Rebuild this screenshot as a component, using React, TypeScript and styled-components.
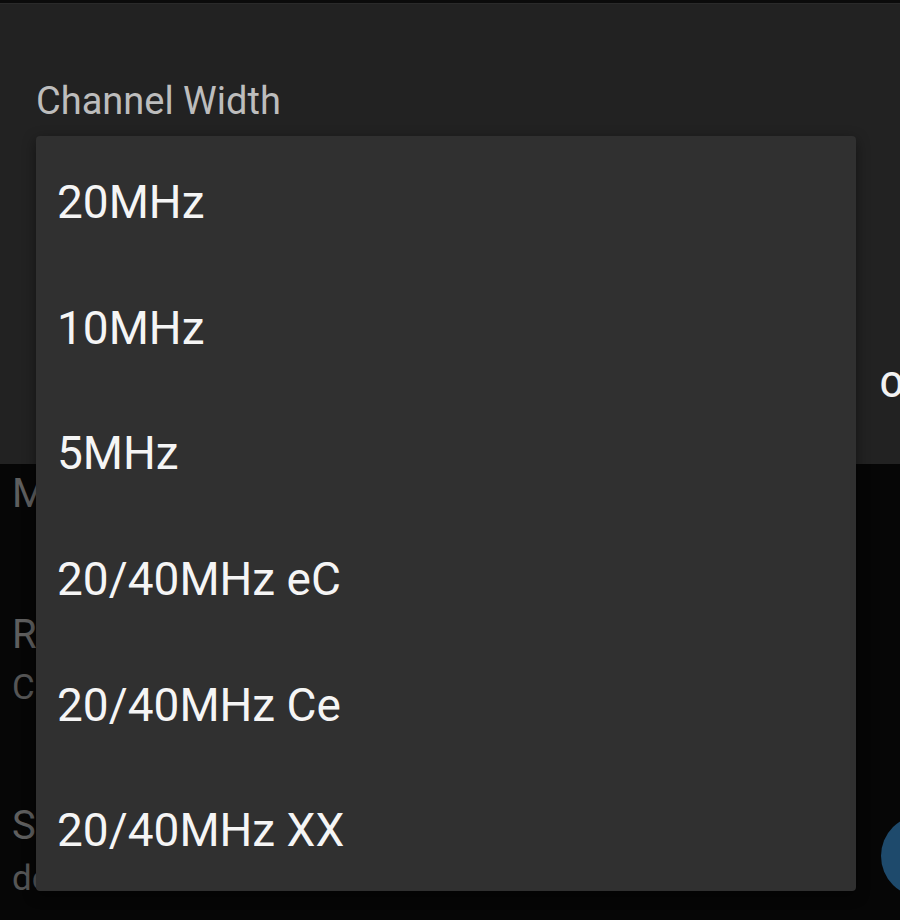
import React from "react";
import styled, { createGlobalStyle } from "styled-components";

const Global = createGlobalStyle`
  html, body { margin: 0; padding: 0; background: #060606; }
  body { font-family: Roboto, "Noto Sans", "Liberation Sans", sans-serif; }
`;

const Screen = styled.div`
  position: relative;
  width: 900px;
  height: 920px;
  overflow: hidden;
  background: #060606;
  display: flex;
  flex-direction: column;
`;

const TopStrip = styled.div`
  height: 3px;
  background: #0b0b0b;
  flex: none;
`;

const Dialog = styled.div`
  height: 461px;
  flex: none;
  background: #222222;
  border-top: 1px solid #2a2a2a;
  box-sizing: border-box;
  display: flex;
  flex-direction: column;
  padding: 75px 0 0 36px;
`;

const FieldLabel = styled.div`
  font-size: 38px;
  line-height: 44px;
  color: #bdbdbd;
`;

const Actions = styled.div`
  margin-top: 242px;
  display: flex;
  justify-content: flex-end;
  margin-right: -26px;
`;

const ActionButton = styled.span`
  font-size: 35px;
  line-height: 41px;
  font-weight: 500;
  color: #f2f2f2;
`;

const PrefList = styled.div`
  display: flex;
  flex-direction: column;
  gap: 94px;
  padding: 6px 0 0 12px;
`;

const Pref = styled.div`
  display: flex;
  flex-direction: column;
  gap: 9px;
`;

const PrefTitle = styled.div`
  font-size: 40px;
  line-height: 47px;
  color: #5e5e5e;
  white-space: nowrap;
`;

const PrefSummary = styled.div`
  font-size: 35px;
  line-height: 41px;
  color: #555555;
  white-space: nowrap;
`;

const Fab = styled.div`
  position: absolute;
  left: 881px;
  top: 815px;
  width: 82px;
  height: 82px;
  border-radius: 50%;
  background: #1e4a6c;
`;

const Menu = styled.ul`
  position: absolute;
  left: 36px;
  top: 136px;
  width: 820px;
  height: 755px;
  margin: 0;
  padding: 4px 0 0;
  box-sizing: border-box;
  list-style: none;
  background: #303030;
  border-radius: 4px;
  box-shadow: 0 4px 14px rgba(0, 0, 0, 0.45);
  overflow: hidden;
`;

const MenuItem = styled.li`
  height: 125.7px;
  line-height: 125.7px;
  padding: 0 21px;
  font-size: 46px;
  color: #f5f5f5;
  white-space: nowrap;
`;

const options = [
  "20MHz",
  "10MHz",
  "5MHz",
  "20/40MHz eC",
  "20/40MHz Ce",
  "20/40MHz XX",
];

export default function App() {
  return (
    <Screen>
      <Global />
      <TopStrip />
      <Dialog>
        <FieldLabel>Channel Width</FieldLabel>
        <Actions>
          <ActionButton>OK</ActionButton>
        </Actions>
      </Dialog>
      <PrefList>
        <Pref>
          <PrefTitle>Mode</PrefTitle>
        </Pref>
        <Pref>
          <PrefTitle>Region</PrefTitle>
          <PrefSummary>Channel</PrefSummary>
        </Pref>
        <Pref>
          <PrefTitle>Security</PrefTitle>
          <PrefSummary>default</PrefSummary>
        </Pref>
      </PrefList>
      <Fab />
      <Menu>
        {options.map((o) => (
          <MenuItem key={o}>{o}</MenuItem>
        ))}
      </Menu>
    </Screen>
  );
}
